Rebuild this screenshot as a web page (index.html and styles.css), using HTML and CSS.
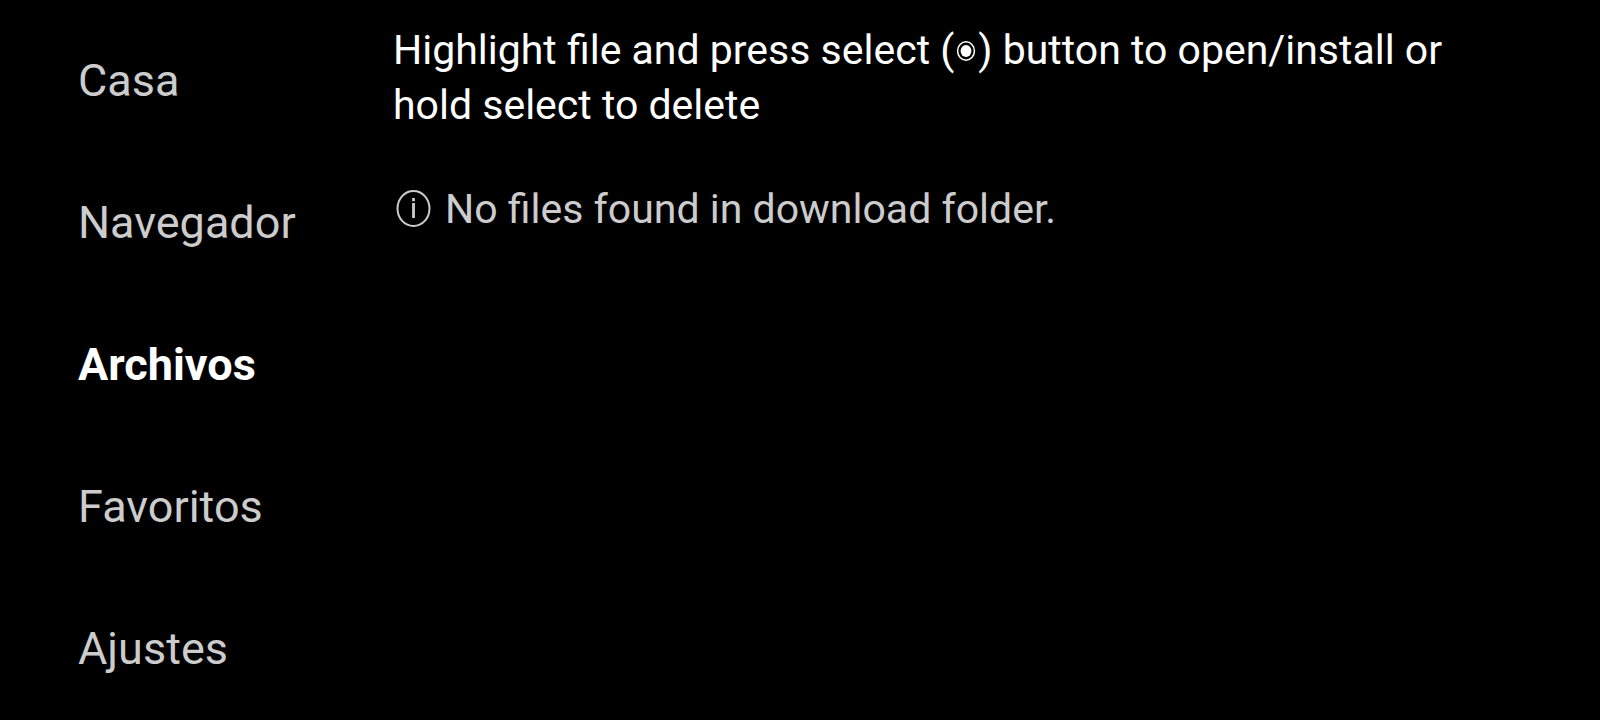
FILE: index.html
```html
<!DOCTYPE html>
<html lang="es">
  <head>
    <meta charset="UTF-8" />
    <meta name="viewport" content="width=device-width, initial-scale=1.0" />
    <title>Archivos</title>
    <link rel="stylesheet" href="styles.css">
  </head>
  <body>
    <nav class="menu">
      <a class="menu-item" href="#casa">Casa</a>
      <a class="menu-item" href="#navegador">Navegador</a>
      <a class="menu-item active" href="#archivos" aria-current="page">Archivos</a>
      <a class="menu-item" href="#favoritos">Favoritos</a>
      <a class="menu-item" href="#ajustes">Ajustes</a>
    </nav>
    <main class="content">
      <p class="hint">
        Highlight file and press select
        (<svg class="select-icon" viewBox="0 0 24 26" aria-hidden="true">
          <ellipse cx="12" cy="13" rx="8.4" ry="9.2" fill="none" stroke="currentColor" stroke-width="1.5" />
          <ellipse cx="12" cy="13" rx="5.4" ry="6.1" fill="currentColor" />
        </svg>) button to open/install or hold select to delete
      </p>
      <p class="empty">
        <svg class="info-icon" viewBox="0 0 40 40" aria-hidden="true">
          <ellipse cx="20.5" cy="18.5" rx="16" ry="17.5" fill="none" stroke="currentColor" stroke-width="2" />
          <path d="M20.5 8v3.2M20.5 13v15" fill="none" stroke="currentColor" stroke-width="2.8" />
        </svg>
        No files found in download folder.
      </p>
    </main>
  </body>
</html>
```

FILE: styles.css
```css
body {
  display: flex;
  margin: 0;
  min-height: 100vh;
  background-color: #000;
  color: #ccc;
  font-family: Roboto, sans-serif;
}
.menu {
  display: flex;
  flex-direction: column;
  flex: 0 0 315px;
  padding: 10px 0 0 78px;
}
.menu-item {
  color: #ccc;
  font-size: 45px;
  line-height: 142px;
  text-decoration: none;
}
.menu-item.active {
  color: #fff;
  font-weight: bold;
}
.content {
  flex: 1;
  padding: 23px 140px 0 0;
  font-size: 41px;
  line-height: 55px;
}
.hint {
  margin: 0;
  color: #fff;
}
.select-icon {
  width: 24px;
  height: 26px;
}
.empty {
  display: flex;
  align-items: center;
  gap: 12px;
  margin: 49px 0 0;
}
.info-icon {
  width: 40px;
  height: 40px;
}
```
